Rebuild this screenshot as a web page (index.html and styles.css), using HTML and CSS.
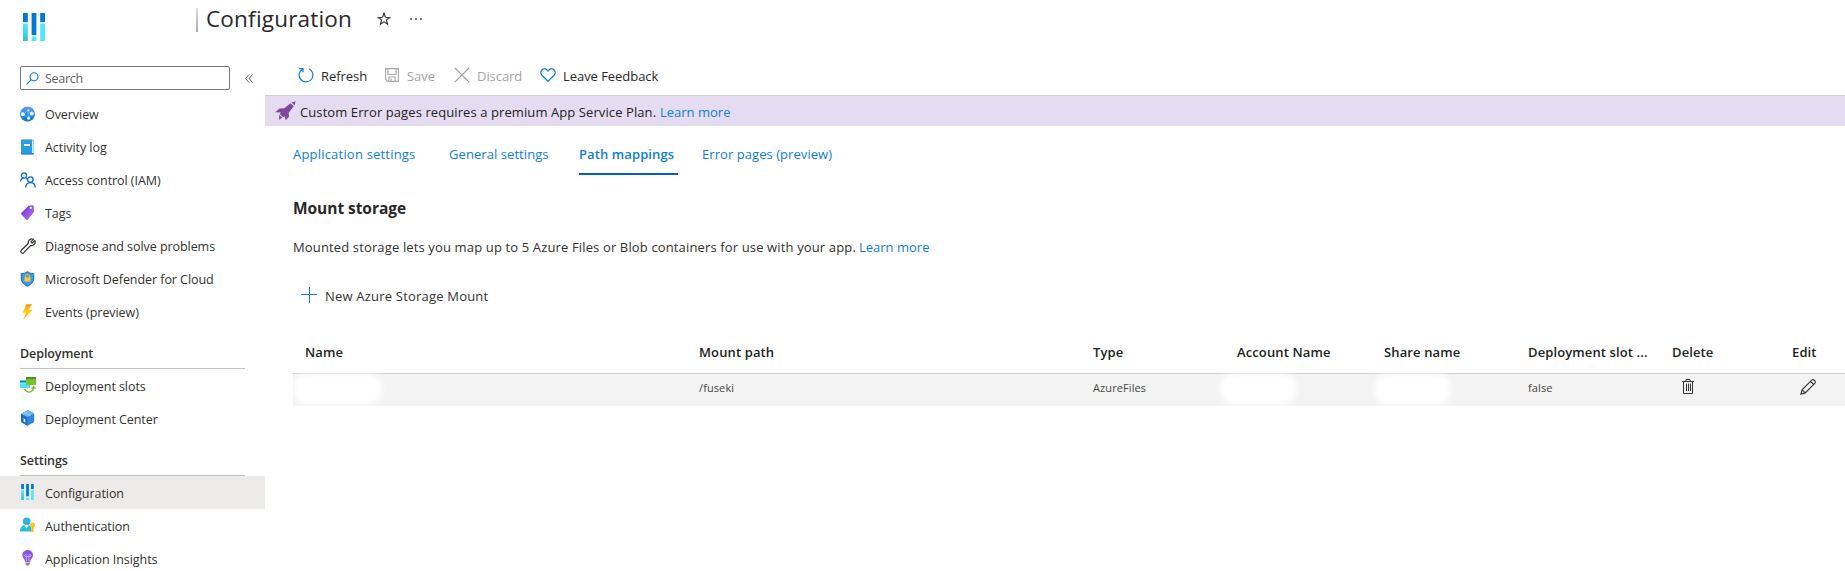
FILE: index.html
```html
<!DOCTYPE html>
<html lang="en">
<head>
<meta charset="utf-8">
<title>Configuration</title>
<link rel="stylesheet" href="styles.css">
</head>
<body>
<svg width="0" height="0" class="defs">
  <defs>
    <linearGradient id="cyan" x1="0" y1="0" x2="0" y2="1"><stop offset="0" stop-color="#50e6ff"/><stop offset="1" stop-color="#32bedd"/></linearGradient>
    <linearGradient id="blue" x1="0" y1="0" x2="0" y2="1"><stop offset="0" stop-color="#5ea0ef"/><stop offset="1" stop-color="#0078d4"/></linearGradient>
    <linearGradient id="purple" x1="0" y1="0" x2="1" y2="1"><stop offset="0" stop-color="#6b2bd9"/><stop offset="1" stop-color="#b77af4"/></linearGradient>
    <linearGradient id="bolt" x1="0" y1="0" x2="0" y2="1"><stop offset="0" stop-color="#f78d1e"/><stop offset=".45" stop-color="#ffd400"/><stop offset="1" stop-color="#faa21d"/></linearGradient>
    <symbol id="sliders" viewBox="0 0 22 28">
      <path fill="#0078d4" d="M0 0h4.800v9H0zM8.600 0h4.800v22h-4.800zM17.200 0h4.800v9h-4.800z"/>
      <path fill="#c3f1ff" d="M0 9h4.800v2H0zM17.200 9h4.800v2h-4.800zM8.600 22h4.800v2h-4.800z"/>
      <path fill="url(#cyan)" d="M0 11h4.800v17H0z"/>
      <path fill="#50e6ff" d="M8.600 24h4.800v4h-4.800zM17.200 11h4.800v17h-4.800z"/>
    </symbol>
  </defs>
</svg>
<div class="page">
  <header class="top">
    <svg class="logo" width="22" height="28"><use href="#sliders"/></svg>
    <span class="bar"></span>
    <h1>Configuration</h1>
    <svg class="star" width="14" height="14" viewBox="0 0 14 14" fill="none" stroke="#333" stroke-width="1.100"><path d="M7 1.200 8.500 5.300 12.800 5.400 9.400 8 10.600 12.300 7 9.800 3.400 12.300 4.600 8 1.200 5.400 5.500 5.300Z"/></svg>
    <svg class="dots" width="12" height="4" viewBox="0 0 12 4" fill="#444"><circle cx="1" cy="2" r=".9"/><circle cx="6" cy="2" r=".9"/><circle cx="11" cy="2" r=".9"/></svg>
  </header>
  <div class="body">
    <nav class="side">
      <div class="searchrow">
        <div class="search">
          <svg width="13" height="13" viewBox="0 0 13 13" fill="none" stroke="#0f78d4" stroke-width="1.100"><circle cx="8" cy="4.800" r="4"/><path d="M5.200 7.600.6 12.300"/></svg>
          <span>Search</span>
        </div>
        <svg class="collapse" width="8" height="9" viewBox="0 0 8 9" fill="none" stroke="#666"><path d="M4 .5.6 4.500 4 8.500M7.500.5 4.100 4.500 7.500 8.500"/></svg>
      </div>
      <a class="item"><svg width="16" height="16" viewBox="0 0 16 16"><circle cx="7.500" cy="8" r="7.500" fill="url(#blue)"/><path d="M3.500 8 8 4 11 8 8.500 12 3.500 8M8 4 8.500 12" stroke="#7dbdf5" stroke-width=".7" fill="none"/><g fill="#e8f5ff"><circle cx="2.800" cy="8.200" r="2"/><circle cx="8.300" cy="4.200" r="1"/><circle cx="11.800" cy="7.500" r="2"/><circle cx="8.600" cy="12.200" r="1.500"/></g></svg><span>Overview</span></a>
      <a class="item"><svg width="16" height="16" viewBox="0 0 16 16"><rect x="1" y=".5" width="13" height="15" rx="1" fill="#8bc8ef"/><path d="M12.800 2v12.500" stroke="#e9f7ff"/><path d="M1 1.500Q1 .5 2 .5H12V14H3Q2 14 2 14.500T3 15.500Q1 15.500 1 14.500Z" fill="#2b9be3"/><path d="M1.500 14h12v1.500h-12z" fill="#1f86cc"/><rect x="4" y="5" width="6" height="2" fill="#fff"/></svg><span>Activity log</span></a>
      <a class="item"><svg width="16" height="16" viewBox="0 0 16 16" fill="none" stroke="#1267d8" stroke-width="1.300"><circle cx="4" cy="3.500" r="2.600"/><path d="M.6 9.500C.7 7.300 2 6.300 4 6.200M6.200 6.200 7.300 7"/><circle cx="10.300" cy="7.600" r="2.800"/><path d="M5.600 15.500C5.800 12.400 7.500 10.700 10.300 10.600S15 12.400 15.300 15.500"/></svg><span>Access control (IAM)</span></a>
      <a class="item"><svg width="16" height="16" viewBox="0 0 16 16"><path d="M8.500.8 12.500.3Q13.500.3 13.700 1.500L14 7 7.700 14.700Q7 15.500 6.300 14.700L1.300 9.200Q.8 8.500 1.400 7.800Z" fill="url(#purple)"/><circle cx="10.800" cy="2.800" r="1.100" fill="#fff"/></svg><span>Tags</span></a>
      <a class="item"><svg width="16" height="16" viewBox="0 0 16 16" fill="none" stroke="#333" stroke-width="1.200" stroke-linejoin="round"><path d="M13.500 1.200 10.900 3.800 12.200 5.100 14.900 2.500C16 5.600 13.800 8.100 10.500 7.600L3.800 14.700C2.200 16.100-.1 13.900 1.300 12.300L8.300 5.500C7.800 2.300 10.500.1 13.500 1.200Z"/></svg><span>Diagnose and solve problems</span></a>
      <a class="item"><svg width="16" height="16" viewBox="0 0 16 16"><path d="M7.500 .2Q10 2.200 14.200 2.200V7.500C14.200 11.500 10.500 14.200 7.500 15.800 4.500 14.200.8 11.500.8 7.500V2.200Q5 2.200 7.500.2Z" fill="#1b6fc9"/><path d="M7.500 1.200Q10 2.900 13.300 3V7.500C13.300 10.800 10.300 13 7.500 14.800 4.700 13 1.700 10.800 1.700 7.500V3Q5 2.900 7.500 1.200Z" fill="#4099ee"/><path d="M5.500 7V5.500a2 2 0 0 1 4 0V7" stroke="#e9bc35" stroke-width="1.200" fill="none"/><rect x="4.500" y="6.300" width="6" height="4.200" rx=".6" fill="#ffca1c"/></svg><span>Microsoft Defender for Cloud</span></a>
      <a class="item"><svg width="16" height="16" viewBox="0 0 16 16"><path d="M6.200.2H12.200L8.500 5.700H12.700L3.200 15.500 6.100 8.700H2.700Z" fill="url(#bolt)"/></svg><span>Events (preview)</span></a>
      <h2 class="group">Deployment</h2>
      <a class="item low"><svg width="16" height="16" viewBox="0 0 16 16"><path d="M0 3.500h6v3H0z" fill="#32c5e8"/><path d="M0 3.500h6V5H0z" fill="#1695b8"/><path d="M0 6.500h10V11H0z" fill="#50dff7"/><path d="M6 0h10v8H6z" fill="#76c42d"/><path d="M6 0h10v2H6z" fill="#568b1d"/><path d="M4.500 12Q6.500 15.500 10 15 13.700 14 13.800 10M11.800 11.700 13.800 9.600 15.600 11.700" stroke="#fff" stroke-width="2.800" fill="none"/><path d="M4.500 12Q6.500 15.500 10 15 13.700 14 13.800 10M11.800 11.700 13.800 9.600 15.600 11.700" stroke="#76bc2d" stroke-width="1.300" fill="none"/></svg><span>Deployment slots</span></a>
      <a class="item low"><svg width="16" height="16" viewBox="0 0 16 16"><path d="M8 0 14.200 3.600V12L7.500 15.700 1 12V4Z" fill="#2c87df"/><path d="M8 0 14.200 3.600 7.300 7 1 4Z" fill="#71b5f5"/><path d="M1 4 7.300 7 7.500 15.700 1 12Z" fill="#1b6fc8"/><path d="M4 2.500 10.500 5.500" stroke="#a5d2fc"/><path d="M3.500 8.300 5.300 9.200V12.600L3.500 11.600Z" fill="#e6f4ff"/></svg><span>Deployment Center</span></a>
      <h2 class="group last">Settings</h2>
      <a class="item active low"><svg width="16" height="16" viewBox="0 0 16 16"><use href="#sliders" x="1" y="0" width="13" height="16"/></svg><span>Configuration</span></a>
      <a class="item low"><svg width="16" height="16" viewBox="0 0 16 16"><path d="M0 14C.3 10.500 2 7.800 6.500 7.800S11.500 10.500 12 14.500H1Q0 14.700 0 14Z" fill="#2dbbdc"/><path d="M4.200 8 6.500 11.500 9 8Z" fill="#c9f4ff"/><circle cx="6.700" cy="4.200" r="3.800" fill="#2bb4d8"/><path d="M12.500 5.500a2.700 2.700 0 0 1 1.300 5V14L12.500 15.500 11.200 14V10.500a2.700 2.700 0 0 1 1.300-5Z" fill="#ffc31b"/></svg><span>Authentication</span></a>
      <a class="item low"><svg width="16" height="16" viewBox="0 0 16 16"><path d="M7.700 0C10.900 0 13 2.300 13 5.200 13 8.300 10.400 8.800 10.200 12H5.200C5 8.800 2.400 8.300 2.400 5.200 2.400 2.300 4.500 0 7.700 0Z" fill="#8b59df"/><path d="M6.500 11.500V6.500H5.200A1 1 0 1 1 6.500 5.500V6.500H8.900V5.500A1 1 0 1 1 10.200 6.500H8.900V11.500" stroke="#cdb3fa" stroke-width=".8" fill="none"/><path d="M5.400 12.500h4.600v1.300L8.900 15.500H6.500L5.400 13.800Z" fill="#888"/></svg><span>Application Insights</span></a>
    </nav>
    <main class="main">
      <div class="commands">
        <span class="cmd refresh"><svg width="16" height="16" viewBox="0 0 16 16" fill="none" stroke="#0f7dd6" stroke-width="1.200"><path d="M10.800 1.700A6.900 6.900 0 1 1 4.300 2.200M1.300 1.600H5V5.300"/></svg><span>Refresh</span></span>
        <span class="cmd off save"><svg width="14" height="14" viewBox="0 0 14 14" fill="none" stroke="#aaa" stroke-width="1.200"><path d="M.6.6H13.400V13.400H2.500L.6 11.500ZM3 .6V6.500H11V.6M3.800 13.400V9H10.200V13.400M6 10.500v3"/></svg><span>Save</span></span>
        <span class="cmd off discard"><svg width="16" height="16" viewBox="0 0 16 16" stroke="#999" stroke-width="1.200"><path d="M.8.8 15.200 15.200M15.200.8.8 15.200"/></svg><span>Discard</span></span>
        <span class="cmd feedback"><svg width="16" height="14" viewBox="0 0 16 14" fill="none" stroke="#0f7dd6" stroke-width="1.200"><path d="M8 13.200 1.700 7C-1 3.700 3.300-1.300 6.800 1.800L8 3 9.200 1.800C12.700-1.300 17 3.700 14.300 7Z"/></svg><span>Leave Feedback</span></span>
      </div>
      <div class="banner">
        <svg width="21" height="21" viewBox="0 0 21 21" fill="#7f4a9c"><path d="M20.500.3 19.600 4.500 16.500 1.600ZM15.500 2.200 18.800 5.300 13.700 11.700 14 15.700 10.700 19.300 9.700 15.200 8 16.200 4.800 13 5.800 11.500.2 11.300 4.500 7.500 9.300 7.200ZM4.200 13.700 7.300 16.800 4 18.700Z"/></svg>
        <span class="notice">Custom Error pages requires a premium App Service Plan.</span>
        <a class="link">Learn more</a>
      </div>
      <div class="content">
        <div class="tabs">
          <a class="tab t1">Application settings</a>
          <a class="tab t2">General settings</a>
          <a class="tab t3 on">Path mappings</a>
          <a class="tab t4">Error pages (preview)</a>
        </div>
        <h3>Mount storage</h3>
        <p><span class="lede">Mounted storage lets you map up to 5 Azure Files or Blob containers for use with your app.</span><a class="link">Learn more</a></p>
        <div class="add"><svg width="16" height="16" viewBox="0 0 16 16" stroke="#1878c8"><path d="M8.500 0v16M0 7.500h16"/></svg><span>New Azure Storage Mount</span></div>
        <div class="row head">
          <span>Name</span><span>Mount path</span><span>Type</span><span>Account Name</span><span>Share name</span><span>Deployment slot ...</span><span>Delete</span><span>Edit</span>
        </div>
        <div class="row data">
          <span><i class="blank b1"></i></span><span>/fuseki</span><span>AzureFiles</span><span><i class="blank b2"></i></span><span><i class="blank b3"></i></span><span>false</span>
          <span class="ic"><svg width="12" height="15" viewBox="0 0 12 15" fill="none" stroke="#333"><path d="M0 2.500H12M4 2.500V.5H8V2.500M1.500 2.500V14.500H10.500V2.500M4.500 4.500V12M6.500 4.500V12M8.500 4.500V12"/></svg></span>
          <span class="ic"><svg width="16" height="16" viewBox="0 0 16 16" fill="none" stroke="#333" stroke-width="1.100"><path d="M.9 15.100 2.100 10.800 11.700 1.200C13.500-.4 16.400 2.500 14.800 4.300L5.200 13.900ZM10.500 2.400 13.600 5.500M2.100 10.800 5.200 13.900"/></svg></span>
        </div>
      </div>
    </main>
  </div>
</div>
</body>
</html>
```
FILE: styles.css
```css
* { box-sizing: border-box; }
body { margin: 0; background: #fff; color: #323130; font: 13px/18px "Open Sans", "Noto Sans", sans-serif; }
.defs { display: block; height: 0; }
.page { height: 571px; overflow: hidden; }
svg { display: block; flex: none; }
span, a { white-space: nowrap; }
h1, h2, h3, p { margin: 0; }

.top { display: flex; height: 55px; padding-left: 23px; }
.logo { margin-top: 13px; }
.bar { width: 2px; height: 24px; margin: 8px 8px 0 151px; background: linear-gradient(#e2dede, #a9a5b0); }
h1 { width: 171px; font-weight: 400; font-size: 22.500px; line-height: 38px; letter-spacing: .2px; color: #292827; }
.star { margin-top: 12px; }
.dots { margin: 17px 0 0 19px; }

.body { display: flex; }
.side { width: 265px; flex: none; padding-top: 11px; }
.searchrow { display: flex; align-items: center; padding-left: 20px; margin-bottom: 8px; height: 24px; }
.search { display: flex; align-items: center; gap: 6px; width: 210px; height: 24px; padding-left: 5px; border: 1px solid #7d7b79; border-radius: 2px; color: #605e5c; font-size: 12.500px; letter-spacing: -.3px; }
.search span { padding-top: 1px; }
.collapse { margin-left: 15px; }
.item { display: flex; align-items: center; gap: 9px; height: 33px; padding-left: 20px; font-size: 12.500px; letter-spacing: -.06px; }
.item svg { margin-top: -2px; }
.low span { padding-top: 2px; }
.active { background: #edebe9; }
.group { height: 40px; margin: 0 20px; padding-top: 16px; border-bottom: 1px solid #c4c2c1; font-size: 12.500px; font-weight: 600; line-height: 18px; letter-spacing: -.08px; }
.last { height: 41px; padding-top: 17px; }

.main { flex: 1; min-width: 0; }
.commands { display: flex; height: 41px; padding-left: 33px; border-bottom: 1px solid #d2d0d3; letter-spacing: -.05px; }
.cmd { display: flex; align-items: center; gap: 8px; height: 41px; width: 88px; color: #292827; }
.cmd svg { margin-top: -1px; }
.refresh { gap: 7px; width: 87px; }
.save { gap: 8px; width: 69px; }
.discard { gap: 7px; width: 86px; }
.feedback { gap: 7px; }
.off { color: #a6a4a2; }
.banner { display: flex; align-items: center; height: 30px; padding-left: 10px; background: #e6dcf1; color: #201f1e; }
.banner svg { margin-right: 4px; }
.banner span, .banner a { padding-top: 2px; }
.notice { width: 360px; letter-spacing: .09px; }
.link, .tab { color: #0f7ed6; }
.content { padding-left: 28px; }
.tabs { display: flex; height: 49px; }
.tab { padding-top: 19px; height: 49px; }
.t1 { width: 156px; letter-spacing: .2px; }
.t2 { width: 130px; letter-spacing: .07px; }
.t3 { width: 99px; margin-right: 24px; letter-spacing: .1px; }
.t4 { letter-spacing: .06px; }
.on { font-weight: 600; border-bottom: 2px solid #015cda; }
h3 { margin-top: 21px; font-size: 15.500px; font-weight: 700; line-height: 24px; letter-spacing: -.05px; color: #292827; }
p { display: flex; margin-top: 18px; }
.lede { width: 566px; letter-spacing: .14px; }
.add { display: flex; align-items: center; gap: 8px; margin: 31px 0 0 8px; height: 18px; letter-spacing: .2px; }
.add svg { margin-top: -2px; }
.row { display: grid; grid-template-columns: 394px 394px 144px 147px 144px 144px 120px 1fr; padding-left: 12px; align-items: center; }
.head { height: 44px; margin-top: 25px; border-bottom: 1px solid #c8d3dc; color: #201f1e; font-weight: 600; letter-spacing: .12px; }
.data { height: 32px; background: #f3f3f3; font-size: 11px; letter-spacing: .1px; color: #494745; position: relative; }
.data > span { height: 32px; line-height: 28px; }
.data .ic { padding: 5px 0 0 10px; }
.data .ic:last-child { padding-left: 8px; }
.blank { position: absolute; top: 0; height: 30px; border-radius: 13px; background: #fff; filter: blur(3px); }
.b1 { left: 0; width: 89px; }
.b2 { left: 927px; width: 76px; }
.b3 { left: 1081px; width: 77px; }
```
